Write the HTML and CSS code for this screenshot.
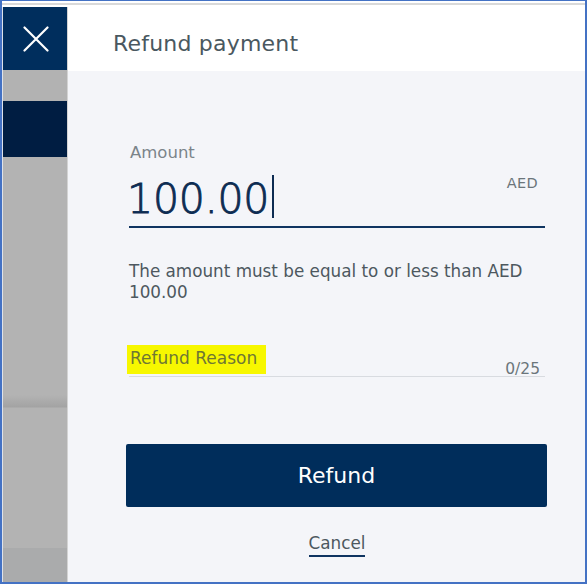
FILE: index.html
```html
<!DOCTYPE html>
<html lang="en">
<head>
<meta charset="utf-8">
<title>Refund payment</title>
<link rel="stylesheet" href="styles.css">
</head>
<body>
<div class="frame">
  <div class="topstrip"></div>
  <div class="main">
    <aside class="sidebar">
      <div class="side-close">
        <svg class="close-icon" width="26" height="26" viewBox="0 0 26 26" aria-hidden="true">
          <path d="M1.5 1.5 L24.5 24.5 M24.5 1.5 L1.5 24.5" stroke="#ffffff" stroke-width="2.2" fill="none" stroke-linecap="round"/>
        </svg>
      </div>
      <div class="side-gap"></div>
      <div class="side-active"></div>
      <div class="side-rest"></div>
    </aside>
    <section class="panel">
      <header class="panel-header">
        <h1 class="title">Refund payment</h1>
      </header>
      <form class="form">
        <label class="field-label">Amount</label>
        <div class="amount-row">
          <div class="amount-value">100.00<span class="caret"></span></div>
          <span class="currency">AED</span>
        </div>
        <p class="helper">The amount must be equal to or less than AED 100.00</p>
        <div class="reason-row">
          <span class="reason-label">Refund Reason</span>
          <span class="counter">0/25</span>
        </div>
        <button type="button" class="btn-primary">Refund</button>
        <div class="cancel-wrap"><a class="cancel">Cancel</a></div>
      </form>
    </section>
  </div>
</div>
</body>
</html>
```
FILE: styles.css
```css
html, body {
  margin: 0;
  padding: 0;
  background: #ffffff;
}

body {
  font-family: "DejaVu Sans", "Liberation Sans", sans-serif;
}

.frame {
  width: 587px;
  height: 584px;
  box-sizing: border-box;
  border: 2px solid #4472c4;
  border-top-width: 1px;
  background: #ffffff;
  display: flex;
  flex-direction: column;
}

.topstrip {
  height: 6px;
  flex: none;
  box-sizing: border-box;
  border-top: 2px solid #ffffff;
  border-bottom: 2px solid #ffffff;
  background: #d9d9d9;
}

.main {
  flex: 1;
  display: flex;
  min-height: 0;
}

.sidebar {
  width: 64px;
  flex: none;
  border-left: 1px solid #dfe3ea;
  border-right: 1px solid #d3d3d3;
  display: flex;
  flex-direction: column;
}

.side-close {
  height: 63px;
  flex: none;
  background: #002e5d;
  display: flex;
  align-items: center;
  justify-content: center;
}

.close-icon {
  display: block;
  margin: 1px 0 0 1px;
}

.side-gap {
  height: 31px;
  flex: none;
  background: #b2b2b2;
}

.side-active {
  height: 56px;
  flex: none;
  background: #001d42;
}

.side-rest {
  flex: 1;
  background: linear-gradient(to bottom,
    #b3b3b3 0,
    #b3b3b3 238px,
    #a3a3a3 250px,
    #b3b3b3 251px,
    #b3b3b3 391px,
    #aaabac 391px);
}

.panel {
  flex: 1;
  display: flex;
  flex-direction: column;
  background: #f4f5f9;
  min-width: 0;
}

.panel-header {
  height: 64px;
  flex: none;
  box-sizing: border-box;
  background: #ffffff;
  padding: 22px 0 0 45px;
}

.title {
  margin: 0;
  font-size: 22px;
  font-weight: normal;
  line-height: 30px;
  letter-spacing: 0.2px;
  color: #4a5860;
}

.form {
  display: flex;
  flex-direction: column;
  padding: 72px 40px 0 61px;
}

.field-label {
  font-size: 16.5px;
  line-height: 20px;
  color: #7b848a;
  padding-left: 1px;
}

.amount-row {
  margin-top: 12px;
  display: flex;
  justify-content: space-between;
  align-items: flex-start;
  padding-bottom: 3px;
  border-bottom: 2px solid #0f3461;
}

.amount-value {
  display: flex;
  align-items: flex-start;
  font-size: 41px;
  font-weight: 300;
  line-height: 48px;
  letter-spacing: -0.2px;
  color: #0d2c52;
  -webkit-text-stroke: 0.9px #0d2c52;
  margin-left: -2px;
}

.caret {
  display: block;
  width: 2px;
  height: 43px;
  margin-left: 3px;
  background: #0d2c52;
}

.currency {
  font-size: 14.5px;
  line-height: 16px;
  letter-spacing: 0.3px;
  color: #6b757b;
  margin-right: 7px;
}

.helper {
  margin: 33px 0 0;
  font-size: 16.8px;
  line-height: 21px;
  color: #4d585f;
}

.reason-row {
  margin-top: 42px;
  display: flex;
  justify-content: space-between;
  align-items: flex-end;
  padding-bottom: 2px;
  border-bottom: 1px solid #d8dbe0;
}

.reason-label {
  background: #f7f700;
  color: #6f7734;
  font-size: 17px;
  line-height: 27px;
  padding: 0 9px 2px 3px;
  margin-left: -2px;
}

.counter {
  font-size: 15.5px;
  line-height: 18px;
  color: #6b757b;
  margin: 0 5px -4px 0;
}

.btn-primary {
  margin: 67px -2px 0 -3px;
  height: 63px;
  padding: 0;
  border: none;
  border-radius: 2px;
  background: #002d5b;
  color: #ffffff;
  font-family: inherit;
  font-size: 22px;
  line-height: 63px;
  cursor: pointer;
}

.cancel-wrap {
  margin-top: 26px;
  display: flex;
  justify-content: center;
}

.cancel {
  font-size: 16.8px;
  line-height: 20px;
  color: #4d585f;
  padding-bottom: 2px;
  border-bottom: 2px solid #0f3461;
  text-decoration: none;
}
```
